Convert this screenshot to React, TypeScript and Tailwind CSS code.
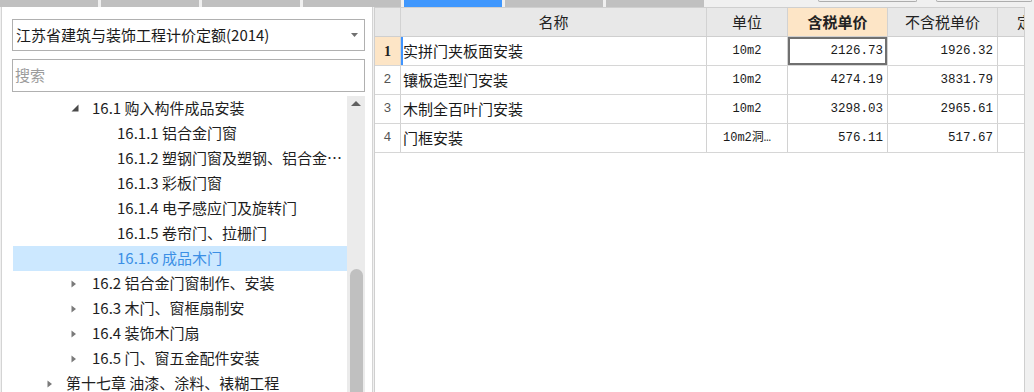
import React from 'react';

const cjk = "'Noto Sans CJK SC', 'Noto Sans', sans-serif";
const mono = "'Liberation Mono', 'Noto Sans CJK SC', monospace";

type TreeItem = {
  label: string;
  level: 0 | 1 | 2;
  state?: 'open' | 'closed';
  selected?: boolean;
};

const tree: TreeItem[] = [
  { label: '16.1 购入构件成品安装', level: 1, state: 'open' },
  { label: '16.1.1 铝合金门窗', level: 2 },
  { label: '16.1.2 塑钢门窗及塑钢、铝合金…', level: 2 },
  { label: '16.1.3 彩板门窗', level: 2 },
  { label: '16.1.4 电子感应门及旋转门', level: 2 },
  { label: '16.1.5 卷帘门、拉栅门', level: 2 },
  { label: '16.1.6 成品木门', level: 2, selected: true },
  { label: '16.2 铝合金门窗制作、安装', level: 1, state: 'closed' },
  { label: '16.3 木门、窗框扇制安', level: 1, state: 'closed' },
  { label: '16.4 装饰木门扇', level: 1, state: 'closed' },
  { label: '16.5 门、窗五金配件安装', level: 1, state: 'closed' },
  { label: '第十七章 油漆、涂料、裱糊工程', level: 0, state: 'closed' },
];

const rows = [
  { no: '1', name: '实拼门夹板面安装', unit: '10m2', tax: '2126.73', noTax: '1926.32' },
  { no: '2', name: '镶板造型门安装', unit: '10m2', tax: '4274.19', noTax: '3831.79' },
  { no: '3', name: '木制全百叶门安装', unit: '10m2', tax: '3298.03', noTax: '2965.61' },
  { no: '4', name: '门框安装', unit: '10m2洞…', tax: '576.11', noTax: '517.67' },
];

function Arrow({ state }: { state?: 'open' | 'closed' }) {
  if (state === 'open') {
    return (
      <svg width="8" height="8" viewBox="0 0 8 8" className="mb-[1px]">
        <path d="M7.5 0.5 L7.5 7.5 L0.5 7.5 Z" fill="#4a4a4a" />
      </svg>
    );
  }
  return (
    <svg width="6" height="8" viewBox="0 0 6 8">
      <path d="M0.5 0.5 L5 4 L0.5 7.5 Z" fill="#7a7a7a" />
    </svg>
  );
}

function TreeRow({ item }: { item: TreeItem }) {
  const pad = item.level === 0 ? 'pl-[34px]' : item.level === 1 ? 'pl-[58px]' : 'pl-[104px]';
  const slot = item.level === 0 ? 'w-[19px]' : 'w-[21px]';
  return (
    <div
      className={`h-[25px] shrink-0 flex items-center whitespace-nowrap text-[15px] ${pad} ${
        item.selected ? 'bg-[#cce8ff] text-[#3b8fe5]' : 'text-[#1e1e1e]'
      }`}
    >
      {item.level < 2 && (
        <span className={`${slot} flex items-center`}>
          <Arrow state={item.state} />
        </span>
      )}
      <span>{item.label}</span>
    </div>
  );
}

export default function App() {
  return (
    <div
      className="w-[1034px] h-[392px] overflow-hidden bg-[#f0f0f0] flex flex-col"
      style={{ fontFamily: cjk }}
    >
      {/* tab strip */}
      <div className="h-[7px] shrink-0 flex gap-[3px]">
        {[0, 1, 2, 3, 4, 5, 6].map((i) => (
          <div key={i} className={`w-[98px] ${i === 4 ? 'bg-[#3f97fd]' : 'bg-[#c0c0c0]'}`} />
        ))}
        <div className="ml-[111px] w-[99px] h-[2px] border-x border-b border-[#adadad] rounded-b-[3px]" />
        <div className="ml-[16px] w-[96px] h-[2px] border-x border-b border-[#adadad] rounded-b-[3px]" />
      </div>

      <div className="flex flex-1 min-h-0">
        {/* left panel */}
        <div className="ml-[1px] w-[372px] bg-white border-l border-r border-[#d4d4d4] flex flex-col pl-[10px] pt-[12px]">
          <div className="w-[353px] h-[32px] shrink-0 border border-[#b0b0b0] flex items-center pl-[3px] pr-[6px] text-[15px] text-[#1a1a1a]">
            <span className="flex-1">江苏省建筑与装饰工程计价定额(2014)</span>
            <svg width="7" height="4" viewBox="0 0 7 4">
              <path d="M0 0 L7 0 L3.5 4 Z" fill="#707070" />
            </svg>
          </div>
          <div className="mt-[8px] w-[353px] h-[33px] shrink-0 border border-[#b0b0b0] flex items-center pl-[2px] text-[15px] text-[#9c9c9c]">
            搜索
          </div>
          <div className="mt-[4px] flex flex-1 min-h-0">
            <div className="ml-[1px] w-[334px] flex flex-col overflow-hidden">
              {tree.map((t) => (
                <TreeRow key={t.label} item={t} />
              ))}
            </div>
            <div className="w-[18px] bg-[#ebebeb] flex flex-col items-center overflow-hidden">
              <div className="h-[173px] shrink-0 pt-[5px]">
                <svg width="10" height="5" viewBox="0 0 10 5">
                  <path d="M0 5 L5 0 L10 5 Z" fill="#606060" />
                </svg>
              </div>
              <div className="w-[13px] flex-1 bg-[#c0c0c0] rounded-t-[7px]" />
            </div>
          </div>
        </div>

        {/* grid */}
        <div className="ml-[1px] w-[651px] bg-white border-l border-r border-t border-[#cfcfcf] flex flex-col overflow-hidden">
          <div className="h-[29px] shrink-0 flex bg-[#e8e8e8] border-b border-[#cfcfcf] text-[15px] text-[#222]">
            <div className="w-[26px] shrink-0 border-r border-[#d2d2d2]" />
            <div className="w-[306px] shrink-0 border-r border-[#d2d2d2] flex items-center justify-center">名称</div>
            <div className="w-[81px] shrink-0 border-r border-[#d2d2d2] flex items-center justify-center">单位</div>
            <div className="w-[100px] shrink-0 border-r border-[#d2d2d2] bg-[#fde5c6] flex items-center justify-center font-bold">
              含税单价
            </div>
            <div className="w-[110px] shrink-0 border-r border-[#d2d2d2] flex items-center justify-center">不含税单价</div>
            <div className="flex-1 flex items-center pl-[19px] whitespace-nowrap">定额</div>
          </div>
          {rows.map((r, i) => (
            <div key={r.no} className="h-[29px] shrink-0 flex border-b border-[#d6d6d6] text-[#1a1a1a]">
              <div
                className={`w-[26px] shrink-0 border-r border-[#d2d2d2] flex items-center justify-center ${
                  i === 0 ? 'bg-[#fde5c6] font-bold text-[14px] text-[#222]' : 'text-[13px] text-[#555]'
                }`}
                style={{ fontFamily: i === 0 ? "'Liberation Serif', serif" : mono }}
              >
                {r.no}
              </div>
              <div
                className={`w-[306px] shrink-0 border-r border-[#d2d2d2] flex items-center pl-[2px] text-[15px] ${
                  i === 0 ? 'shadow-[inset_2px_0_0_#3f94ff]' : ''
                }`}
              >
                {r.name}
              </div>
              <div
                className="w-[81px] shrink-0 border-r border-[#d2d2d2] flex items-center justify-center text-[12px] whitespace-nowrap"
                style={{ fontFamily: mono }}
              >
                {r.unit}
              </div>
              <div
                className={`w-[100px] shrink-0 border-r border-[#d2d2d2] flex items-center justify-end pr-[4px] text-[12.5px] ${
                  i === 0 ? 'shadow-[inset_0_0_0_2px_#707070]' : ''
                }`}
                style={{ fontFamily: mono }}
              >
                {r.tax}
              </div>
              <div
                className="w-[110px] shrink-0 border-r border-[#d2d2d2] flex items-center justify-end pr-[4px] text-[12.5px]"
                style={{ fontFamily: mono }}
              >
                {r.noTax}
              </div>
              <div className="flex-1" />
            </div>
          ))}
        </div>
      </div>
    </div>
  );
}
